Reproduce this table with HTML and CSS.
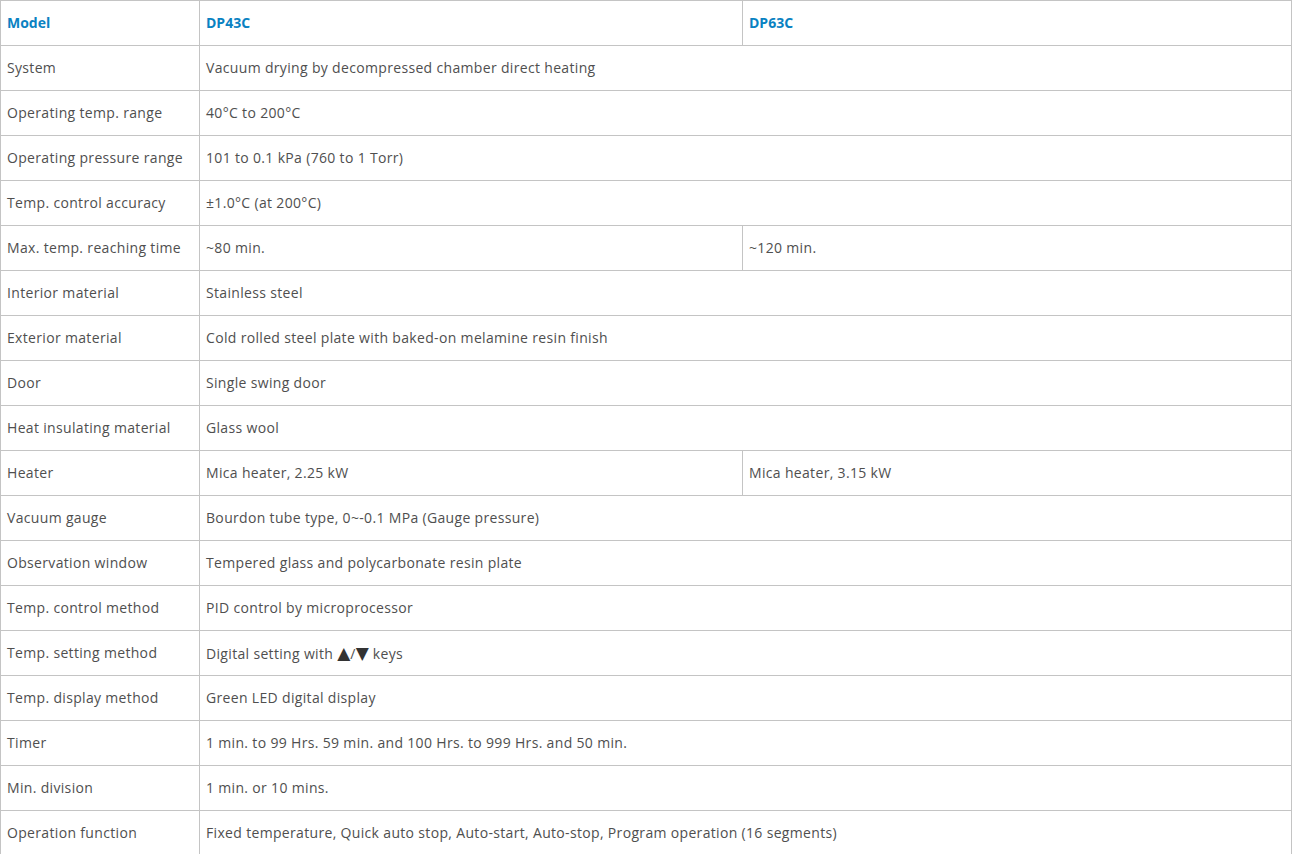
FILE: index.html
```html
<!DOCTYPE html>
<html lang="en">
<head>
<meta charset="utf-8">
<title>DP43C / DP63C Specifications</title>
<link rel="stylesheet" href="styles.css">
</head>
<body>
<table class="spec">
  <colgroup>
    <col class="c1">
    <col class="c2">
    <col class="c3">
  </colgroup>
  <thead>
    <tr><th>Model</th><th>DP43C</th><th>DP63C</th></tr>
  </thead>
  <tbody>
    <tr><td>System</td><td colspan="2">Vacuum drying by decompressed chamber direct heating</td></tr>
    <tr><td>Operating temp. range</td><td colspan="2">40°C to 200°C</td></tr>
    <tr><td>Operating pressure range</td><td colspan="2">101 to 0.1 kPa (760 to 1 Torr)</td></tr>
    <tr><td>Temp. control accuracy</td><td colspan="2">±1.0°C (at 200°C)</td></tr>
    <tr><td>Max. temp. reaching time</td><td>~80 min.</td><td>~120 min.</td></tr>
    <tr><td>Interior material</td><td colspan="2">Stainless steel</td></tr>
    <tr><td>Exterior material</td><td colspan="2">Cold rolled steel plate with baked-on melamine resin finish</td></tr>
    <tr><td>Door</td><td colspan="2">Single swing door</td></tr>
    <tr><td>Heat insulating material</td><td colspan="2">Glass wool</td></tr>
    <tr><td>Heater</td><td>Mica heater, 2.25 kW</td><td>Mica heater, 3.15 kW</td></tr>
    <tr><td>Vacuum gauge</td><td colspan="2">Bourdon tube type, 0~-0.1 MPa (Gauge pressure)</td></tr>
    <tr><td>Observation window</td><td colspan="2">Tempered glass and polycarbonate resin plate</td></tr>
    <tr><td>Temp. control method</td><td colspan="2">PID control by microprocessor</td></tr>
    <tr><td>Temp. setting method</td><td colspan="2">Digital setting with <span class="arrow">▲</span>/<span class="arrow">▼</span> keys</td></tr>
    <tr><td>Temp. display method</td><td colspan="2">Green LED digital display</td></tr>
    <tr><td>Timer</td><td colspan="2">1 min. to 99 Hrs. 59 min. and 100 Hrs. to 999 Hrs. and 50 min.</td></tr>
    <tr><td>Min. division</td><td colspan="2">1 min. or 10 mins.</td></tr>
    <tr><td>Operation function</td><td colspan="2">Fixed temperature, Quick auto stop, Auto-start, Auto-stop, Program operation (16 segments)</td></tr>
  </tbody>
</table>
</body>
</html>
```

FILE: styles.css
```css
html, body {
  margin: 0;
  padding: 0;
  background: #ffffff;
}

body {
  font-family: "Open Sans", "Liberation Sans", Arial, sans-serif;
  font-size: 14px;
  color: #4f4f4f;
}

.spec {
  border-collapse: collapse;
  table-layout: fixed;
  width: 1291px;
}

.spec .c1 { width: 199px; }
.spec .c2 { width: 543px; }
.spec .c3 { width: 549px; }

.spec th,
.spec td {
  border: 1px solid #c4c4c4;
  height: 45px;
  padding: 0 6px;
  text-align: left;
  vertical-align: middle;
  box-sizing: border-box;
  white-space: nowrap;
  line-height: 20px;
}

.spec td {
  letter-spacing: 0.33px;
}

.spec th {
  color: #0a82c2;
  font-weight: 700;
}

.arrow {
  font-family: "DejaVu Sans", sans-serif;
  font-size: 17px;
  letter-spacing: 0;
  color: #333333;
}
```
